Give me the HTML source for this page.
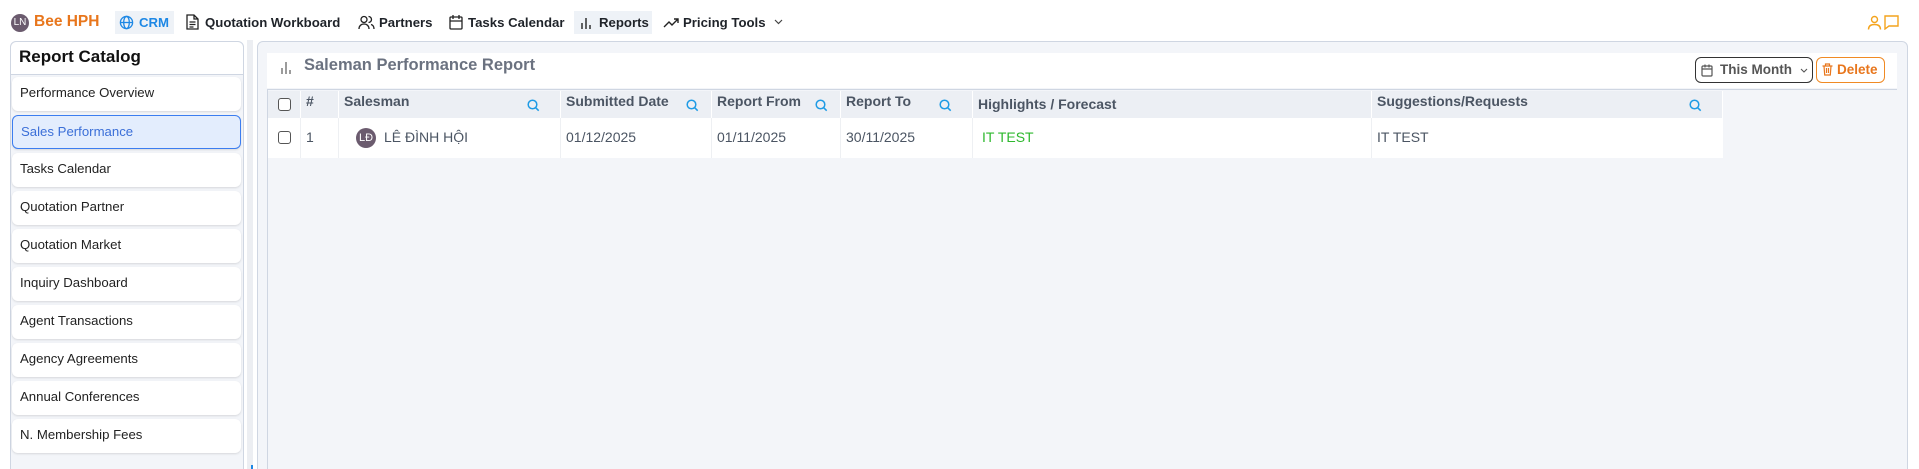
<!DOCTYPE html>
<html><head><meta charset="utf-8"><style>
*{box-sizing:border-box;margin:0;padding:0}
html,body{width:1919px;height:469px;overflow:hidden}
body{background:#fff;font-family:"Liberation Sans","Noto Sans CJK JP",sans-serif;position:relative;color:#222}
.a{position:absolute}
.nav{font-size:13.2px;font-weight:bold;color:#1f2329;top:15px;white-space:nowrap}
svg{display:block}
.item{position:absolute;left:12px;width:229px;height:34px;background:#fff;border-radius:6px;box-shadow:0 1px 2px rgba(0,0,0,.12);font-size:13.2px;color:#222;padding:8px 0 0 8px}
.th{position:absolute;top:91px;height:27px;font-size:14px;font-weight:bold;color:#4b5563;padding:2px 0 0 5px;border-right:1px solid #fff}
.td{position:absolute;top:118px;height:40px;font-size:14px;color:#4b5563;padding:11px 0 0 5px;background:#fff;border-right:1px solid #eef0f3}
.cb{width:13px;height:13px;border:1.5px solid #555;border-radius:3px;background:#fff;position:absolute}
</style></head><body>
<div class="a" style="left:11px;top:14px;width:18px;height:18px;border-radius:50%;background:#6b5b6e;color:#fff;font-size:10px;text-align:center;line-height:18px">LN</div>
<div class="a nav" style="left:34px;top:13px;color:#e8761c;font-size:15.5px">Bee HPH</div>
<div class="a" style="left:115px;top:11px;width:59px;height:23px;background:#eef2f7"></div>
<svg class="a" style="left:119px;top:15px" width="15" height="15" viewBox="0 0 16 16" fill="none" stroke="#1e88e5" stroke-width="1.4"><circle cx="8" cy="8" r="6.5"/><ellipse cx="8" cy="8" rx="3" ry="6.5"/><path d="M1.5 8h13"/></svg>
<div class="a nav" style="left:139px;color:#1e88e5">CRM</div>
<svg class="a" style="left:186px;top:14px" width="13" height="16" viewBox="0 0 13 16" fill="none" stroke="#222" stroke-width="1.3"><path d="M1 1h7l4 4v10H1z M8 1v4h4 M3.5 8h6 M3.5 10.5h6 M3.5 13h4"/></svg>
<div class="a nav" style="left:205px">Quotation Workboard</div>
<svg class="a" style="left:358px;top:15px" width="17" height="15" viewBox="0 0 17 15" fill="none" stroke="#222" stroke-width="1.3"><circle cx="6" cy="4.5" r="3"/><path d="M1 14c0-3 2-5 5-5s5 2 5 5 M10.5 1.5a3 3 0 0 1 0 6 M13 9.5c2 .5 3 2 3 4.5"/></svg>
<div class="a nav" style="left:379px">Partners</div>
<svg class="a" style="left:449px;top:14px" width="14" height="16" viewBox="0 0 14 16" fill="none" stroke="#222" stroke-width="1.3"><rect x="1" y="3" width="12" height="12" rx="1"/><path d="M1 7h12 M4 1v4 M10 1v4"/></svg>
<div class="a nav" style="left:468px">Tasks Calendar</div>
<div class="a" style="left:574px;top:11px;width:78px;height:23px;background:#eef2f7"></div>
<svg class="a" style="left:580px;top:16px" width="12" height="13" viewBox="0 0 12 13" stroke="#222" stroke-width="1.4"><path d="M2 13V7 M6 13V2 M10 13V9"/></svg>
<div class="a nav" style="left:599px">Reports</div>
<svg class="a" style="left:663px;top:16px" width="17" height="12" viewBox="0 0 17 12" fill="none" stroke="#222" stroke-width="1.4"><path d="M1 11l5-5 3 3 6-6 M11 3h4v4"/></svg>
<div class="a nav" style="left:683px">Pricing Tools</div>
<svg class="a" style="left:774px;top:19px" width="9" height="6" viewBox="0 0 9 6" fill="none" stroke="#444" stroke-width="1.2"><path d="M1 1l3.5 3.5L8 1"/></svg>
<svg class="a" style="left:1867px;top:15px" width="15" height="15" viewBox="0 0 15 15" fill="none" stroke="#f4a41d" stroke-width="1.4"><circle cx="7.5" cy="4.5" r="3"/><path d="M1.5 14.5c0-3.5 2.5-5 6-5s6 1.5 6 5"/></svg>
<svg class="a" style="left:1884px;top:15px" width="15" height="15" viewBox="0 0 15 15" fill="none" stroke="#f4a41d" stroke-width="1.4"><path d="M1 1h13v10H5l-4 3z"/></svg>
<div class="a" style="left:10px;top:41px;width:234px;height:440px;background:#f3f5f9;border:1px solid #cfd6e2;border-radius:6px"></div>
<div class="a" style="left:11px;top:42px;width:232px;height:33px;background:#fff;border-bottom:1px solid #cfd6e2;border-radius:6px 6px 0 0;font-size:17px;font-weight:bold;color:#111;padding:5px 0 0 8px">Report Catalog</div>
<div class="item" style="top:77px">Performance Overview</div>
<div class="item" style="top:115px;background:#e3edfd;border:1px solid #3b7df0;color:#3b6fd8">Sales Performance</div>
<div class="item" style="top:153px">Tasks Calendar</div>
<div class="item" style="top:191px">Quotation Partner</div>
<div class="item" style="top:229px">Quotation Market</div>
<div class="item" style="top:267px">Inquiry Dashboard</div>
<div class="item" style="top:305px">Agent Transactions</div>
<div class="item" style="top:343px">Agency Agreements</div>
<div class="item" style="top:381px">Annual Conferences</div>
<div class="item" style="top:419px">N. Membership Fees</div>
<div class="a" style="left:247px;top:40px;width:6px;height:429px;background:#eceef2"></div>
<div class="a" style="left:251px;top:465px;width:2px;height:4px;background:#1e88e5"></div>
<div class="a" style="left:257px;top:41px;width:1651px;height:440px;background:#f3f5f9;border:1px solid #cfd6e2;border-radius:6px"></div>
<div class="a" style="left:267px;top:53px;width:1630px;height:35px;background:#fff"></div>
<svg class="a" style="left:280px;top:60px" width="12" height="14" viewBox="0 0 12 14" stroke="#666" stroke-width="1.3"><path d="M2 14V8 M6 14V2 M10 14V10"/></svg>
<div class="a" style="left:304px;top:56px;font-size:16.5px;font-weight:bold;color:#6b7280">Saleman Performance Report</div>
<div class="a" style="left:1695px;top:57px;width:118px;height:26px;border:1.3px solid #333;border-radius:6px;font-size:13.5px;font-weight:bold;color:#555;padding:4px 0 0 24px">This Month</div>
<svg class="a" style="left:1701px;top:64px" width="12" height="13" viewBox="0 0 12 13" fill="none" stroke="#555" stroke-width="1.2"><rect x="1" y="2" width="10" height="10" rx="1"/><path d="M1 5h10 M4 0.5v3 M8 0.5v3"/></svg>
<svg class="a" style="left:1800px;top:68px" width="8" height="5" viewBox="0 0 8 5" fill="none" stroke="#555" stroke-width="1.1"><path d="M1 1l3 3 3-3"/></svg>
<div class="a" style="left:1816px;top:57px;width:69px;height:26px;border:1.3px solid #f08a24;border-radius:6px;font-size:13.5px;font-weight:bold;color:#e8761c;padding:4px 0 0 20px">Delete</div>
<svg class="a" style="left:1822px;top:63px" width="11" height="13" viewBox="0 0 11 13" fill="none" stroke="#e8761c" stroke-width="1.2"><path d="M0.5 3h10 M3.5 3V1h4v2 M2 3l.7 9h5.6L9 3 M4.5 5v5 M6.5 5v5"/></svg>
<div class="a" style="left:267px;top:89px;width:1630px;height:380px;border-left:1px solid #cfd6e2;border-top:1px solid #cfd6e2"></div>
<div class="a" style="left:268px;top:91px;width:1455px;height:27px;background:#eceff4"></div>
<div class="th" style="left:268px;width:33px"></div><div class="cb" style="left:278px;top:98px"></div>
<div class="th" style="left:301px;width:38px">#</div>
<div class="th" style="left:339px;width:222px">Salesman</div>
<div class="th" style="left:561px;width:151px">Submitted Date</div>
<div class="th" style="left:712px;width:129px">Report From</div>
<div class="th" style="left:841px;width:132px">Report To</div>
<div class="th" style="left:973px;width:399px;padding-top:5px">Highlights / Forecast</div>
<div class="th" style="left:1372px;width:351px">Suggestions/Requests</div>
<svg class="a" style="left:527px;top:99px" width="13" height="13" viewBox="0 0 13 13" fill="none" stroke="#1e9be5" stroke-width="1.5"><circle cx="5.5" cy="5.5" r="4.3"/><path d="M8.7 8.7l3 3"/></svg>
<svg class="a" style="left:686px;top:99px" width="13" height="13" viewBox="0 0 13 13" fill="none" stroke="#1e9be5" stroke-width="1.5"><circle cx="5.5" cy="5.5" r="4.3"/><path d="M8.7 8.7l3 3"/></svg>
<svg class="a" style="left:815px;top:99px" width="13" height="13" viewBox="0 0 13 13" fill="none" stroke="#1e9be5" stroke-width="1.5"><circle cx="5.5" cy="5.5" r="4.3"/><path d="M8.7 8.7l3 3"/></svg>
<svg class="a" style="left:939px;top:99px" width="13" height="13" viewBox="0 0 13 13" fill="none" stroke="#1e9be5" stroke-width="1.5"><circle cx="5.5" cy="5.5" r="4.3"/><path d="M8.7 8.7l3 3"/></svg>
<svg class="a" style="left:1689px;top:99px" width="13" height="13" viewBox="0 0 13 13" fill="none" stroke="#1e9be5" stroke-width="1.5"><circle cx="5.5" cy="5.5" r="4.3"/><path d="M8.7 8.7l3 3"/></svg>
<div class="td" style="left:268px;width:33px"></div><div class="cb" style="left:278px;top:131px"></div>
<div class="td" style="left:301px;width:38px">1</div>
<div class="td" style="left:339px;width:222px;padding-left:45px">LÊ ĐÌNH HỘI</div>
<div class="a" style="left:356px;top:128px;width:20px;height:20px;border-radius:50%;background:#6b5b6e;color:#fff;font-size:11px;text-align:center;line-height:20px">LĐ</div>
<div class="td" style="left:561px;width:151px">01/12/2025</div>
<div class="td" style="left:712px;width:129px">01/11/2025</div>
<div class="td" style="left:841px;width:132px">30/11/2025</div>
<div class="td" style="left:973px;width:399px;color:#2eb82e;padding-left:9px">IT TEST</div>
<div class="td" style="left:1372px;width:351px;border-right:none">IT TEST</div>
</body></html>
